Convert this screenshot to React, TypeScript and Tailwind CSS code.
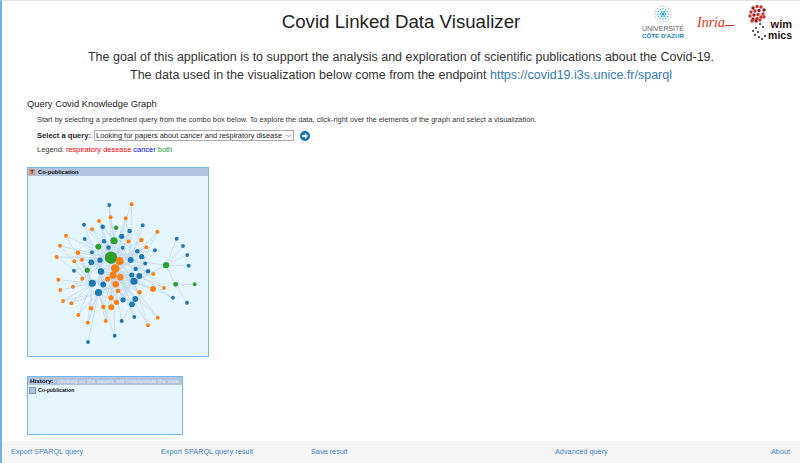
const BLUE = '#1f77b4'
const ORANGE = '#ff7f0e'
const GREEN = '#2ca02c'

// x, y, r, colour, indexes of the nodes it links to
type GraphNode = [number, number, number, string, number[]]

const hubs: GraphNode[] = [
  [111, 257.7, 9.5, GREEN, []],
  [115.3, 268.5, 6.5, ORANGE, []],
  [101, 271.5, 5, BLUE, []],
  [92.3, 283.3, 5.5, BLUE, []],
  [98.5, 292.5, 5.5, BLUE, []],
  [134, 281.3, 5.5, BLUE, []],
  [130.7, 260, 4.5, BLUE, []],
  [114, 240.7, 5.5, GREEN, []],
  [135.3, 299, 4.5, BLUE, []],
  [113, 275.3, 5.5, ORANGE, []],
  [139.3, 276, 4.5, BLUE, []],
  [166, 265.2, 4.5, GREEN, []],
  [175.7, 284.3, 3.5, GREEN, []],
  [103.2, 284.5, 4.5, BLUE, []],
]

const others: GraphNode[] = [
  [109.3, 205, 3, BLUE, [7, 0]],
  [110.7, 217.3, 3, ORANGE, [7, 0]],
  [99, 221, 3, ORANGE, [7, 0]],
  [84, 224.7, 3, BLUE, [0, 2]],
  [92, 229.3, 3, ORANGE, [0, 6]],
  [102.7, 226.7, 3.5, BLUE, [7, 0, 2]],
  [116, 227.7, 3.5, GREEN, [7, 0]],
  [66, 235.7, 3, ORANGE, [0, 3]],
  [84.7, 239, 3, BLUE, [0, 2]],
  [121.7, 236.3, 4, BLUE, [0, 1, 9]],
  [104, 241.3, 3.5, BLUE, [0, 9, 6]],
  [60, 245.7, 3, ORANGE, [3, 0]],
  [98.3, 246.7, 4.5, GREEN, [0, 2, 6]],
  [108.5, 247.5, 3.5, BLUE, [0, 1, 5]],
  [78, 252.7, 3.5, ORANGE, [0, 3, 2]],
  [92, 252.3, 3, BLUE, [0, 13]],
  [122.7, 247.8, 3, BLUE, [0, 9, 6]],
  [56.7, 257, 3, ORANGE, [3, 0]],
  [119.7, 261, 6, ORANGE, [0, 5, 3]],
  [100, 260.2, 4, BLUE, [0, 5, 4]],
  [74.3, 261.3, 3, ORANGE, [0, 3]],
  [82, 259.7, 3, ORANGE, [0, 3]],
  [91.3, 262.3, 4.5, BLUE, [0, 1, 5]],
  [131.7, 204.3, 3, ORANGE, [6, 0]],
  [125.7, 218.3, 3, ORANGE, [6, 0, 1]],
  [142.7, 225.3, 3, BLUE, [0, 6]],
  [129.7, 231, 3.5, BLUE, [0, 1, 6, 9]],
  [157.3, 231.7, 3, ORANGE, [6, 5]],
  [141.3, 240, 3.5, ORANGE, [0, 1, 9]],
  [128.5, 241.5, 3, ORANGE, [0, 9]],
  [176.7, 238.7, 3, BLUE, [11]],
  [183, 246, 3, BLUE, [11]],
  [187.3, 255, 3, BLUE, [11]],
  [188.7, 265.7, 3, BLUE, [11]],
  [146.3, 247.3, 3, ORANGE, [0, 2, 9]],
  [155, 250.3, 3, BLUE, [0, 5]],
  [137.3, 251.2, 3.5, BLUE, [0, 1, 4]],
  [141.7, 256.7, 4, BLUE, [0, 1, 3]],
  [145.3, 263.5, 3, BLUE, [0, 9, 4]],
  [74, 270.7, 3, BLUE, [0, 3]],
  [87.3, 270.2, 4, GREEN, [0, 3]],
  [120.3, 277.3, 5, ORANGE, [0, 3, 5, 8]],
  [58.3, 279.7, 3, ORANGE, [3]],
  [82.3, 278.7, 3, ORANGE, [3, 0]],
  [107.7, 279, 4, ORANGE, [0, 5, 3]],
  [115.7, 284.3, 5, ORANGE, [0, 5, 4]],
  [73, 286.7, 3, ORANGE, [3, 0]],
  [60.3, 290, 3, ORANGE, [3]],
  [118, 291, 3.5, ORANGE, [0, 4, 5]],
  [63, 301, 3, ORANGE, [3, 4]],
  [71.3, 303.3, 3, ORANGE, [3, 4]],
  [111, 297.8, 4, ORANGE, [0, 9, 5]],
  [123, 299.8, 4, BLUE, [0, 9, 5]],
  [116.5, 302.3, 4, ORANGE, [1, 5, 4]],
  [103.3, 307, 3.5, ORANGE, [4, 2, 9]],
  [111.3, 307.2, 4.5, ORANGE, [9, 5, 2]],
  [91, 308.2, 3.5, ORANGE, [4, 3]],
  [78.3, 315, 3, ORANGE, [4, 3]],
  [105.7, 321, 3, ORANGE, [4, 9]],
  [87.7, 322.7, 3, ORANGE, [4, 3]],
  [121.7, 321, 3, BLUE, [8, 9]],
  [114.7, 335.7, 3, BLUE, [9, 4]],
  [88, 342, 3, BLUE, [4]],
  [135.7, 269, 3.5, BLUE, [0, 3]],
  [148, 271.2, 3.5, BLUE, [0, 4]],
  [153.3, 274, 3, ORANGE, [0, 4, 9]],
  [131.8, 275, 4, BLUE, [0, 3, 2]],
  [153, 289, 4.5, ORANGE, [1, 5, 9]],
  [164, 288, 3, ORANGE, [10, 6]],
  [139.5, 292.3, 3.5, ORANGE, [0, 2]],
  [173, 297.7, 3, BLUE, [10, 5]],
  [194.7, 284.3, 3, GREEN, [12]],
  [187, 302.7, 3, BLUE, [12]],
  [132, 304.3, 4.5, BLUE, [0, 1, 2]],
  [134.3, 317, 3, BLUE, [9, 1]],
  [157.7, 317.7, 3, ORANGE, [9, 0]],
  [148, 325.3, 3, ORANGE, [1, 5]],
  [175.7, 284.3, 3.5, GREEN, [11]],
  [166, 265.2, 4.5, GREEN, [6, 5]],
]

const nodes = [...hubs, ...others]

function Graph() {
  return (
    <svg viewBox="28 176 180 180" className="h-[180px] w-[180px]">
      {others.map((n, i) =>
        n[4].map(t => (
          <line key={`${i}-${t}`} x1={n[0]} y1={n[1]} x2={hubs[t][0]} y2={hubs[t][1]} stroke="#c3d9ec" strokeWidth="0.8" />
        ))
      )}
      {nodes.map((n, i) => (
        <circle key={i} cx={n[0]} cy={n[1]} r={n[2] * 0.65} fill={n[3]} />
      ))}
    </svg>
  )
}

function UniLogo() {
  const dots: { x: number; y: number; r: number }[] = []
  const rings = [
    { rad: 3.5, count: 6, r: 1.2 },
    { rad: 7, count: 12, r: 0.9 },
    { rad: 10.5, count: 16, r: 0.7 },
  ]
  rings.forEach(ring => {
    for (let i = 0; i < ring.count; i++) {
      const a = (i / ring.count) * Math.PI * 2
      dots.push({ x: 12 + Math.cos(a) * ring.rad, y: 12 + Math.sin(a) * ring.rad, r: ring.r })
    }
  })
  return (
    <div className="flex w-[44px] flex-col items-center">
      <svg viewBox="0 0 24 24" className="h-[18px] w-[18px]">
        <circle cx="12" cy="12" r="2" fill="#2aa3cf" />
        {dots.map((d, i) => (
          <circle key={i} cx={d.x} cy={d.y} r={d.r} fill="#35a9d3" />
        ))}
      </svg>
      <span className="mt-[2px] text-[7px] leading-[7px] whitespace-nowrap text-[#666]">UNIVERSITÉ</span>
      <span className="text-[6.2px] leading-[7px] font-bold whitespace-nowrap text-[#0f86ad]">CÔTE D'AZUR</span>
    </div>
  )
}

function InriaLogo() {
  return (
    <div className="mt-[11px] ml-[12px] flex w-[37px] items-end self-start">
      <span className="[font-family:'Liberation_Serif',serif] text-[14px] leading-[13px] text-[#e63312] italic">Inria</span>
      <span className="mb-[3px] h-px flex-1 bg-[#e63312]" />
    </div>
  )
}

const rose = [
  [6, 3], [10, 1.5], [14, 2], [17, 5], [4, 7], [8, 6], [12, 5.5], [16, 9], [3, 11], [7, 10], [11, 9.5],
  [14, 12], [6, 14], [10, 13.5], [13, 15], [9, 16], [17, 12], [5, 16],
]
const stem = [[13, 19], [16, 22], [9, 23], [6, 26], [11, 27], [8, 30], [12, 32], [15, 34], [18, 31]]

function WimmicsLogo() {
  return (
    <div className="relative ml-[13px] h-[36px] w-[45px]">
      <svg viewBox="0 0 45 36" className="absolute top-0 left-0 h-[36px] w-[45px]">
        {rose.map(([x, y], i) => (
          <circle key={i} cx={x} cy={y} r="1.7" fill={i % 3 === 0 ? '#8f1a1a' : '#c9332f'} />
        ))}
        {stem.map(([x, y], i) => (
          <circle key={i} cx={x} cy={y} r="1" fill="#222" />
        ))}
      </svg>
      <div className="absolute top-[15px] right-0 flex flex-col items-end gap-[2px] [font-family:'Liberation_Sans',sans-serif] font-bold text-[#1a1010]">
        <span className="text-[11px] leading-[9px] text-[#3a0d0d]">wim</span>
        <span className="text-[10.5px] leading-[9px]">mics</span>
      </div>
    </div>
  )
}

export default function App() {
  return (
    <div className="flex h-[463px] w-[800px] flex-col overflow-hidden border-t border-l-2 border-t-[#e4e4e4] border-l-[#6db3ea] bg-white [font-family:'Liberation_Sans',Arial,sans-serif] text-[#333]">
      <header className="grid h-[45px] grid-cols-[1fr_auto_1fr] items-start">
        <div />
        <h1 className="mt-[8px] text-[18.7px] leading-[26px] font-normal text-[#222]">Covid Linked Data Visualizer</h1>
        <div className="flex justify-end pt-[4px] pr-[8px]">
          <UniLogo />
          <InriaLogo />
          <WimmicsLogo />
        </div>
      </header>

      <div className="mt-[2px] text-center text-[12.5px] leading-[18px] text-[#333]">
        <p>The goal of this application is to support the analysis and exploration of scientific publications about the Covid-19.</p>
        <p>
          The data used in the visualization below come from the endpoint{' '}
          <a className="text-[#337ab7]" href="#">https://covid19.i3s.unice.fr/sparql</a>
        </p>
      </div>

      <main className="flex-1 pl-[25px]">
        <h2 className="mt-[14px] text-[9.4px] leading-[12px] font-normal text-[#222]">Query Covid Knowledge Graph</h2>
        <div className="pl-[10px]">
          <p className="mt-[5px] text-[7.4px] leading-[10px] text-[#333]">
            Start by selecting a predefined query from the combo box below. To explore the data, click-right over the elements of the graph and select a visualization.
          </p>
          <div className="mt-[5px] flex items-center">
            <label className="w-[57px] text-[7.6px] leading-[11px] font-bold text-[#222]">Select a query:</label>
            <div className="relative h-[11px] w-[200px]">
              <select className="block h-full w-full appearance-none rounded-none border border-[#aaa] bg-white pl-[1px] text-[7.45px] leading-[9px] text-[#222]">
                <option>Looking for papers about cancer and respiratory disease</option>
              </select>
              <svg viewBox="0 0 8 8" className="absolute top-[2px] right-[2px] h-[7px] w-[7px]">
                <path d="M1.5 3 L4 5.5 L6.5 3" fill="none" stroke="#555" strokeWidth="0.8" />
              </svg>
            </div>
            <svg viewBox="0 0 20 20" className="ml-[6px] h-[10px] w-[10px]">
              <circle cx="10" cy="10" r="10" fill="#1a6fb5" />
              <path d="M4 8 H10 V4 L16 10 L10 16 V12 H4 Z" fill="#fff" />
            </svg>
          </div>
          <p className="mt-[4px] text-[7.45px] leading-[10px] text-[#333]">
            Legend: <span className="text-[#f00]">respiratory desease</span> <span className="text-[#00f]">cancer</span> <span className="text-[#1a9a3a]">both</span>
          </p>
        </div>

        <section className="mt-[12px] h-[190px] w-[182px] border border-[#74b6f4] bg-[#e6f6ff]">
          <div className="flex h-[8px] items-center gap-[3px] bg-[#b0c4de]">
            <span className="ml-[1px] flex h-[6px] w-[6px] items-center justify-center bg-[#e09a80] text-[5px] leading-none font-bold text-[#333]">T</span>
            <span className="text-[5.8px] leading-[8px] font-bold text-[#111]">Co-publication</span>
          </div>
          <Graph />
        </section>

        <section className="mt-[19px] h-[59px] w-[156px] border border-[#74b6f4] bg-[#e6f6ff]">
          <div className="flex h-[8px] items-center gap-[4px] bg-[#b0c4de] pl-[2px] text-[6.2px] leading-[8px] font-bold whitespace-nowrap">
            <span className="text-[#111]">History:</span>
            <span className="text-[5.4px] text-[#dbe7f3]">clicking on the square will hide/unhide the view</span>
          </div>
          <div className="mt-[2px] flex items-center gap-[2px] pl-[1px]">
            <span className="h-[7px] w-[7px] border border-[#6f9dc8] bg-[#b0c4de]" />
            <span className="text-[5.2px] leading-[7px] font-bold text-[#111]">Co-publication</span>
          </div>
        </section>
      </main>

      <footer className="flex h-[22px] items-center bg-[#f5f5f5] pl-[9px] text-[7.3px] leading-[10px] text-[#3f86c5]">
        <a href="#" className="w-[150px]">Export SPARQL query</a>
        <a href="#" className="w-[150px]">Export SPARQL query result</a>
        <a href="#" className="w-[244px]">Save result</a>
        <a href="#" className="w-[216px]">Advanced query</a>
        <a href="#">About</a>
      </footer>
    </div>
  )
}
